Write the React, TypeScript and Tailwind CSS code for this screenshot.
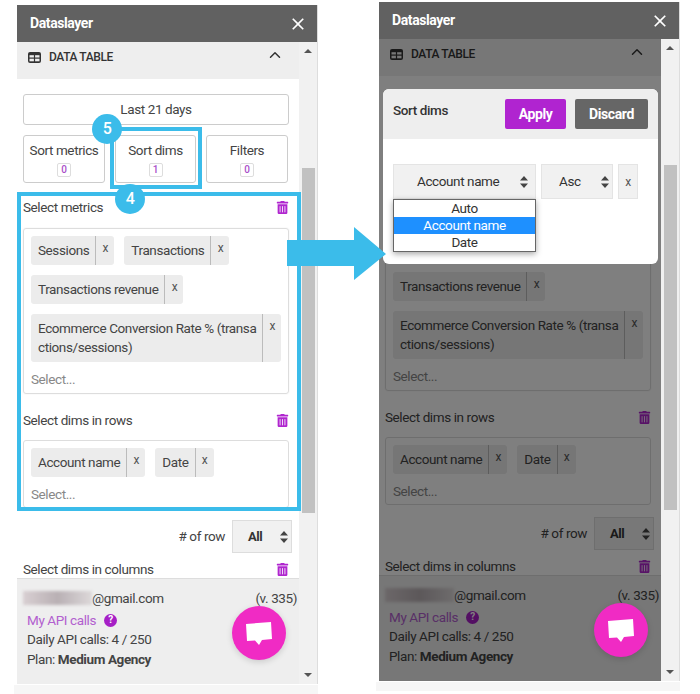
import { ChevronUp } from "lucide-react";
import { FaTrashAlt } from "react-icons/fa";
import { MdClose } from "react-icons/md";

function TableIcon() {
  return (
    <svg width="13" height="11" viewBox="0 0 13 11" className="shrink-0">
      <rect width="13" height="11" rx="2" fill="#333" />
      <rect x="1.5" y="3.2" width="4.4" height="2.3" fill="#eee" />
      <rect x="7.1" y="3.2" width="4.4" height="2.3" fill="#eee" />
      <rect x="1.5" y="6.7" width="4.4" height="2.6" fill="#eee" />
      <rect x="7.1" y="6.7" width="4.4" height="2.6" fill="#eee" />
    </svg>
  );
}

function SortArrows() {
  return (
    <svg width="8" height="12" viewBox="0 0 8 12" className="shrink-0">
      <path d="M4 0 8 4.6H0Z M0 7.4H8L4 12Z" fill="#444" />
    </svg>
  );
}

function ChatIcon() {
  return (
    <svg width="28" height="25" viewBox="0 0 28 25">
      <path d="M1 3 26 1 27 18 17 19 14 24 10 19.5 2 20Z" fill="#fff" />
    </svg>
  );
}

function Chip({ children, wide }: { children: React.ReactNode; wide?: boolean }) {
  return (
    <div className={`flex rounded-[3px] bg-[#ececec] text-[#444] ${wide ? "w-[251px]" : ""}`}>
      <div className="min-w-0 flex-1 whitespace-nowrap border-r border-[#bbb] py-[5px] pl-[7px] pr-[6px] leading-[19px]">
        {children}
      </div>
      <div className="w-[18px] shrink-0 py-[3px] text-center text-[12px] leading-[19px] text-[#555]">x</div>
    </div>
  );
}

function Label({ text, className }: { text: string; className: string }) {
  return (
    <div className={`flex h-[20px] items-center justify-between text-[#444] ${className}`}>
      <span>{text}</span>
      <FaTrashAlt className="text-[13px] text-[#b026cf]" />
    </div>
  );
}

function CountButton({ label, count, width }: { label: string; count: number; width: string }) {
  return (
    <div className={`flex h-[48px] flex-col items-center rounded-[3px] border border-[#ccc] pt-[5px] text-[#444] ${width}`}>
      <span className="whitespace-nowrap leading-[18px]">{label}</span>
      <span className="mt-[4px] flex h-[14px] w-[14px] items-center justify-center rounded-[2px] border border-[#ddd] text-[10px] font-medium leading-none text-[#a94fc9]">
        {count}
      </span>
    </div>
  );
}

function Panel({ left, top, dimmed, children }: { left: string; top: string; dimmed?: boolean; children?: React.ReactNode }) {
  return (
    <div className={`absolute flex h-[679px] w-[301px] flex-col border-r border-[#ddd] ${left} ${top}`}>
      <header className="flex h-[37px] shrink-0 items-center justify-between bg-[#616161] pl-[13px] pr-[9px] text-[14px] font-bold text-white">
        <span>Dataslayer</span>
        <MdClose className="text-[20px]" />
      </header>
      <div className="flex min-h-0 flex-1">
        <div className="relative flex w-[282px] flex-col">
          <div className="flex h-[37px] shrink-0 items-center justify-between bg-[#eee] pb-[7px] pl-[11px] pr-[15px] text-[#333]">
            <div className="flex items-center gap-[8px] text-[12px] font-medium">
              <TableIcon />
              <span>DATA TABLE</span>
            </div>
            <ChevronUp size={18} strokeWidth={2} className="-mt-[5px]" />
          </div>
          <main className="h-[500px] shrink-0 overflow-hidden border-b border-[#ddd] bg-white pl-[6px] pr-[10px] pt-[15px]">
            <div className="flex h-[31px] items-center justify-center rounded-[3px] border border-[#ccc] text-[#444]">
              Last 21 days
            </div>
            <div className="mt-[10px] flex justify-between pr-px">
              <CountButton label="Sort metrics" count={0} width="w-[82px]" />
              <CountButton label="Sort dims" count={1} width="w-[81px]" />
              <CountButton label="Filters" count={0} width="w-[82px]" />
            </div>
            <Label text="Select metrics" className="mt-[14px]" />
            <div className="mt-[11px] h-[166px] rounded-[3px] border border-[#ddd] p-[7px] shadow-[0_0_2px_#eee]">
              <div className="flex flex-wrap gap-[10px]">
                <Chip>Sessions</Chip>
                <Chip>Transactions</Chip>
                <Chip>Transactions revenue</Chip>
                <Chip wide>
                  Ecommerce Conversion Rate % (transa
                  <br />
                  ctions/sessions)
                </Chip>
              </div>
              <div className="mt-[7px] text-[#888]">Select...</div>
            </div>
            <Label text="Select dims in rows" className="mt-[16px]" />
            <div className="mt-[10px] h-[68px] rounded-[3px] border border-[#ddd] p-[7px]">
              <div className="flex gap-[10px]">
                <Chip>Account name</Chip>
                <Chip>Date</Chip>
              </div>
              <div className="mt-[7px] text-[#888]">Select...</div>
            </div>
            <div className="mt-[12px] flex items-center justify-end gap-[7px] text-[#444]">
              <span># of row</span>
              <div className="-mr-[3px] flex h-[33px] w-[60px] items-center justify-between border border-[#ddd] bg-[#f1f1f1] pl-[15px] pr-[3px] text-[13px] font-bold text-[#333]">
                All
                <SortArrows />
              </div>
            </div>
            <Label text="Select dims in columns" className="mt-[6px]" />
          </main>
          <footer className="flex-1 bg-[#eee] pl-[6px] pr-[2px] pt-[10px] text-[#444]">
            <div className="flex items-center justify-between">
              <div className="flex items-center leading-[18px]">
                <div className="h-[14px] w-[69px] bg-gradient-to-r from-[#d8cfd2] via-[#b9b0b4] to-[#dcd8d9] blur-[1.5px]" />
                <span>@gmail.com</span>
              </div>
              <span className="leading-[18px]">(v. 335)</span>
            </div>
            <div className="ml-[4px] mt-[4px] flex items-center gap-[8px] leading-[18px] text-[#b260cf]">
              My API calls
              <span className="flex h-[13px] w-[13px] items-center justify-center rounded-full bg-[#a61fc6] text-[10px] font-bold leading-none text-white">
                ?
              </span>
            </div>
            <div className="ml-[4px] mt-px leading-[19px]">Daily API calls: 4 / 250</div>
            <div className="ml-[4px] mt-[1px] leading-[19px]">
              Plan: <span className="font-bold">Medium Agency</span>
            </div>
          </footer>
          {dimmed && <div className="absolute inset-0 z-10 bg-black/50" />}
          <div className="absolute left-[215px] top-[564px] z-20 flex h-[54px] w-[54px] items-center justify-center rounded-full bg-[#f02bc4] shadow-[0_2px_6px_rgba(0,0,0,0.15)]">
            <ChatIcon />
          </div>
          {children}
        </div>
        <div className="flex w-[18px] flex-col items-center bg-[#f1f1f1] pt-[7px]">
          <div className="h-0 w-0 border-x-[4px] border-b-[4px] border-x-transparent border-b-[#555]" />
          <div className="ml-px mt-[115px] h-[345px] w-[13px] bg-[#c1c1c1]" />
          <div className="mt-[160px] h-0 w-0 border-x-[4px] border-t-[4px] border-x-transparent border-t-[#555]" />
        </div>
      </div>
    </div>
  );
}

function SortDimsModal() {
  return (
    <div className="absolute left-[4px] top-[50px] z-30 h-[175px] w-[275px] rounded-[6px] bg-white text-[#333]">
      <div className="flex h-[50px] items-center justify-between rounded-t-[6px] bg-[#eee] px-[10px]">
        <span className="-mt-[7px] font-medium">Sort dims</span>
        <div className="flex gap-[9px] text-[14px] font-bold text-white">
          <div className="flex h-[30px] w-[61px] items-center justify-center rounded-[2px] bg-[#b024d0]">Apply</div>
          <div className="flex h-[30px] w-[73px] items-center justify-center rounded-[2px] bg-[#666]">Discard</div>
        </div>
      </div>
      <div className="relative ml-[10px] mt-[25px] flex gap-[5px]">
        <div className="flex h-[35px] w-[143px] items-center border border-[#e4e4e4] bg-[#f1f1f1] pl-[23px] pr-[7px]">
          <span className="flex-1">Account name</span>
          <SortArrows />
        </div>
        <div className="flex h-[35px] w-[72px] items-center border border-[#e4e4e4] bg-[#f1f1f1] pl-[17px] pr-[3px]">
          <span className="flex-1">Asc</span>
          <SortArrows />
        </div>
        <div className="flex h-[35px] w-[20px] items-center justify-center border border-[#e4e4e4] bg-[#f1f1f1] text-[12px] text-[#555]">
          x
        </div>
        <ul className="absolute left-0 top-[35px] w-[143px] border border-[#666] bg-white text-center leading-[17px] text-[#333] shadow-[0_2px_6px_rgba(0,0,0,0.35)]">
          <li className="h-[17px]">Auto</li>
          <li className="h-[17px] bg-[#1e90ff] text-white">Account name</li>
          <li className="h-[17px]">Date</li>
        </ul>
      </div>
    </div>
  );
}

export default function App() {
  return (
    <div className="relative h-[694px] w-[700px] overflow-hidden bg-white font-['Roboto',sans-serif] text-[13.5px] tracking-[-0.4px]">
      <Panel left="left-[17px]" top="top-[5px]" />
      <Panel left="left-[379px]" top="top-[2px]" dimmed>
        <SortDimsModal />
      </Panel>
      <div className="absolute left-[14px] top-[685px] h-[9px] w-[304px] bg-[#f6f6f6]" />
      <div className="absolute left-[376px] top-[682px] h-[9px] w-[304px] bg-[#f6f6f6]" />

      {/* step highlights */}
      <div className="absolute left-[110px] top-[127px] h-[62px] w-[92px] border-[4px] border-[#3bbcea]" />
      <div className="absolute left-[17px] top-[192px] h-[319px] w-[284px] border-[4px] border-[#3bbcea]" />
      <div className="absolute left-[92px] top-[114px] flex h-[30px] w-[30px] items-center justify-center rounded-full bg-[#3bbcea] text-[16px] font-medium text-white">
        5
      </div>
      <div className="absolute left-[115px] top-[184px] flex h-[30px] w-[30px] items-center justify-center rounded-full bg-[#3bbcea] text-[16px] font-medium text-white">
        4
      </div>
      <svg className="absolute left-[287px] top-[226px] z-40" width="100" height="55" viewBox="0 0 100 55">
        <path d="M0 14H67V1L99 28 67 54V40H0Z" fill="#3bbcea" />
      </svg>
    </div>
  );
}
